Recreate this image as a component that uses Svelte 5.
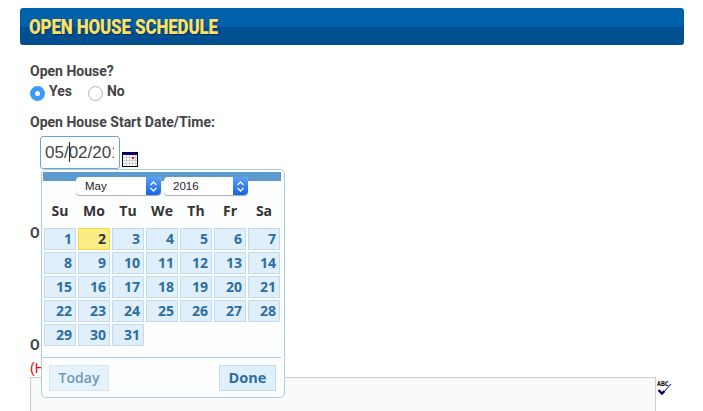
<script lang="ts">
  const weekdays = ['Su', 'Mo', 'Tu', 'We', 'Th', 'Fr', 'Sa'];
  const days = Array.from({ length: 31 }, (_, i) => i + 1);
  const selectedDay = 2;
</script>

<div class="page">
  <header class="section-head"><h2>OPEN HOUSE SCHEDULE</h2></header>

  <form class="form" onsubmit={(e) => e.preventDefault()}>
    <div class="label">Open House?</div>
    <div class="radios">
      <span class="radio-item"><span class="radio checked"></span>Yes</span>
      <span class="radio-item"><span class="radio"></span>No</span>
    </div>

    <div class="label start-label">Open House Start Date/Time:</div>
    <div class="date-row">
      <div class="date-input"><div class="date-value">05/<span class="caret"></span>02/2016</div></div>
      <svg class="cal-icon" width="16" height="15" viewBox="0 0 16 15" shape-rendering="crispEdges">
        <rect x="0.5" y="0.5" width="15" height="14" fill="#fff" stroke="#000" />
        <rect x="1" y="1" width="14" height="2" fill="#0000a0" />
        <path d="M1 5.5H15M1 8.5H15M1 11.5H15M4.5 3V14M7.5 3V14M10.5 3V14M13.5 3V14" stroke="#d0d0d0" fill="none" />
        <rect x="10" y="5" width="2" height="2" fill="#e8102a" />
      </svg>

      <div class="datepicker">
        <div class="dp-title"></div>
        <div class="dp-selects">
          <div class="select month"><span>May</span><i class="arrows"><svg width="9" height="13" viewBox="0 0 9 13"><path d="M1.5 5L4.5 2L7.5 5M1.5 8L4.5 11L7.5 8" fill="none" stroke="#fff" stroke-width="1.3" /></svg></i></div>
          <div class="select year"><span>2016</span><i class="arrows"><svg width="9" height="13" viewBox="0 0 9 13"><path d="M1.5 5L4.5 2L7.5 5M1.5 8L4.5 11L7.5 8" fill="none" stroke="#fff" stroke-width="1.3" /></svg></i></div>
        </div>
        <div class="dp-grid">
          {#each weekdays as w}
            <div class="dow">{w}</div>
          {/each}
          <!-- May 2016 starts on a Sunday, no leading blanks -->
          {#each days as d}
            <div class="day" class:current={d === selectedDay}>{d}</div>
          {/each}
        </div>
        <div class="dp-footer">
          <button type="button" class="dp-btn today">Today</button>
          <button type="button" class="dp-btn done">Done</button>
        </div>
      </div>
    </div>

    <div class="label end-label">O</div>
    <div class="label notes-label">O</div>
    <div class="hint">(H</div>
    <div class="notes-row">
      <div class="notes"></div>
      <div class="spell">
        <span class="abc">ABC</span>
        <svg width="15" height="12" viewBox="0 0 15 12"><path d="M1 7L5 11L14 1" fill="none" stroke="#000070" stroke-width="1" /><path d="M1.5 7L5 10.5L7.5 8" fill="none" stroke="#000070" stroke-width="2.4" /></svg>
      </div>
    </div>
  </form>
</div>

<style>
  :global(body) {
    background: #fff;
    overflow: hidden;
  }

  .page {
    height: 411px;
    padding: 8px 19px 0 20px;
    box-sizing: border-box;
    overflow: hidden;
    font-family: "Liberation Sans", Arial, sans-serif;
    color: #444;
  }

  .section-head {
    height: 37px;
    border-radius: 3px;
    background: linear-gradient(#0060a9 0, #0060a9 19px, #004f90 19px, #004f90 100%);
    display: flex;
    align-items: center;
    padding-left: 9px;
  }

  .section-head h2 {
    margin: 0;
    font-family: Roboto, sans-serif;
    font-weight: 900;
    font-size: 20px;
    letter-spacing: -0.2px;
    color: #ffe066;
    text-shadow: 1px 1px 1px #00315f;
    transform: scaleX(0.85);
    transform-origin: left center;
    white-space: nowrap;
  }

  .form {
    padding: 18px 0 0 10px;
  }

  .label {
    font-family: Roboto, "Liberation Sans", sans-serif;
    font-weight: bold;
    font-size: 14px;
    line-height: 17px;
  }

  .radios {
    display: flex;
    gap: 16px;
    margin-top: 3px;
    height: 20px;
  }

  .radio-item {
    display: flex;
    gap: 4px;
    font-family: Roboto, "Liberation Sans", sans-serif;
    font-weight: bold;
    font-size: 14px;
    line-height: 17px;
  }

  .radio {
    width: 15px;
    height: 15px;
    margin-top: 3px;
    box-sizing: border-box;
    border-radius: 50%;
    border: 1px solid #b5b5b5;
    background: #fff;
  }

  .radio.checked {
    border: 5px solid #3b99fc;
  }

  .start-label {
    margin-top: 11px;
  }

  .date-row {
    position: relative;
    display: flex;
    align-items: flex-end;
    gap: 2px;
    margin: 5px 0 0 10px;
  }

  .date-input {
    width: 80px;
    height: 33px;
    box-sizing: border-box;
    padding: 0 5px 0 4px;
    border: 1px solid #6aa5d8;
    border-radius: 3px;
    font-size: 17px;
    line-height: 31px;
    color: #444;
  }

  .date-value {
    overflow: hidden;
    white-space: nowrap;
  }

  .caret {
    display: inline-block;
    width: 0;
    height: 20px;
    vertical-align: -4px;
    border-left: 1px solid #222;
    margin-right: -1px;
  }

  .cal-icon {
    margin-bottom: 2px;
  }

  .datepicker {
    position: absolute;
    left: 1px;
    top: 33px;
    width: 244px;
    height: 229px;
    box-sizing: border-box;
    padding: 2px 3px 2px 1px;
    background: #fdfefe;
    border: 1px solid #a9cce3;
    border-radius: 5px;
    font-family: "Open Sans", Verdana, sans-serif;
    z-index: 5;
  }

  .dp-title {
    height: 9px;
    background: #5b9bd0;
  }

  .dp-selects {
    display: flex;
    gap: 3px;
    margin: -4px 0 0 33px;
    height: 18px;
  }

  .select {
    position: relative;
    width: 85px;
    height: 18px;
    box-sizing: border-box;
    padding-left: 9px;
    background: #fff;
    border-radius: 4px;
    box-shadow: 0 1px 1px #aaa;
    font-family: "Liberation Sans", Arial, sans-serif;
    font-size: 11.5px;
    line-height: 18px;
    color: #222;
    overflow: hidden;
  }

  .select.year {
    width: 84px;
  }

  .arrows {
    position: absolute;
    right: 0;
    top: 0;
    width: 15px;
    height: 18px;
    display: flex;
    align-items: center;
    justify-content: center;
    background: linear-gradient(#5aa0f8, #1565e8);
  }

  .dp-grid {
    display: grid;
    grid-template-columns: repeat(7, 32px);
    grid-template-rows: 31px;
    grid-auto-rows: 22px;
    gap: 2px;
    margin-left: 1px;
  }

  .dow {
    line-height: 32px;
    text-align: center;
    font-weight: bold;
    font-size: 14px;
    color: #333;
  }

  .day {
    box-sizing: border-box;
    border: 1px solid #c5dbec;
    background: #dfeffc;
    color: #2e6e9e;
    font-weight: bold;
    font-size: 14px;
    line-height: 20px;
    text-align: right;
    padding-right: 3px;
  }

  .day.current {
    border-color: #f9dd34;
    background: #fbec88;
    color: #363636;
  }

  .dp-footer {
    display: flex;
    justify-content: space-between;
    margin-top: 11px;
    padding: 7px 5px 0 6px;
    border-top: 1px solid #a9cce3;
  }

  .dp-btn {
    height: 26px;
    padding: 0 0 2px;
    box-sizing: border-box;
    border: 1px solid #c5dbec;
    background: #dfeffc;
    color: #2e6e9e;
    font-family: inherit;
    font-weight: bold;
    font-size: 14.5px;
  }

  .dp-btn.today {
    width: 60px;
    font-weight: 600;
    font-size: 14px;
    opacity: 0.7;
  }

  .dp-btn.done {
    width: 57px;
  }

  .end-label {
    margin-top: 56px;
  }

  .notes-label {
    margin-top: 95px;
  }

  .hint {
    margin-top: 6px;
    font-size: 14px;
    line-height: 17px;
    color: #e00;
  }

  .notes-row {
    display: flex;
    align-items: flex-start;
    gap: 1px;
  }

  .notes {
    width: 626px;
    height: 60px;
    box-sizing: border-box;
    background: #fafafa;
    border: 1px solid #ccc;
  }

  .spell {
    display: flex;
    flex-direction: column;
    margin-top: 4px;
  }

  .abc {
    font-family: "DejaVu Sans Mono", monospace;
    font-size: 6.5px;
    font-weight: bold;
    line-height: 6px;
    color: #000;
  }

  .spell svg {
    margin-top: -4px;
  }
</style>
